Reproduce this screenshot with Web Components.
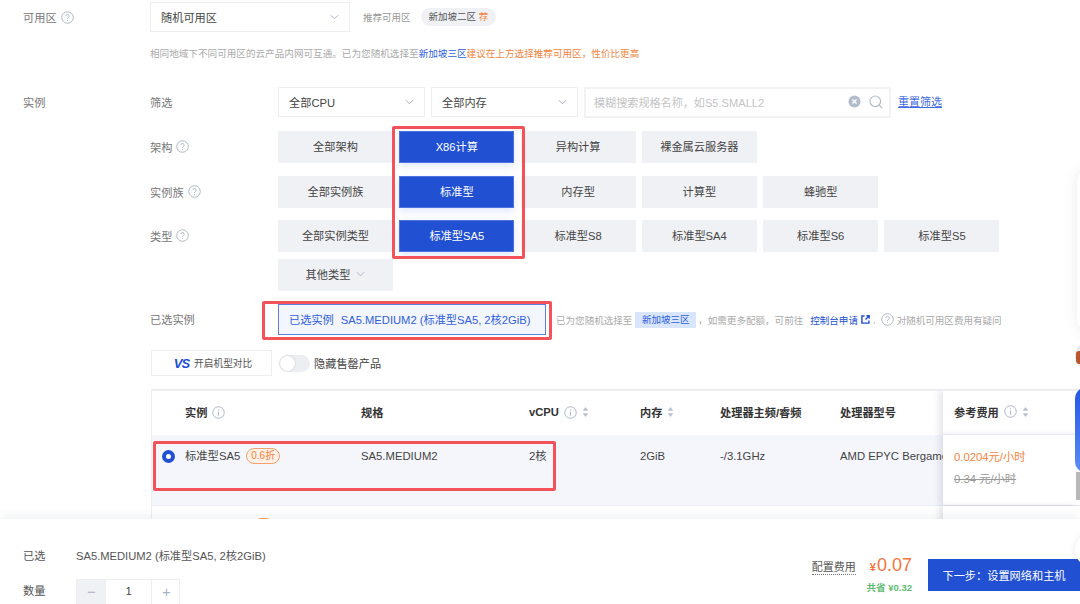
<!DOCTYPE html>
<html lang="zh">
<head>
<meta charset="utf-8">
<title>实例配置</title>
<style>
html,body{margin:0;height:604px;overflow:hidden;background:#fff}
body{font-family:"Liberation Sans","Noto Sans CJK SC",sans-serif;font-size:11.2px;color:#444}
</style>
</head>
<body>
<config-page></config-page>
<script>
const HELP=`<svg viewBox="0 0 14 14" width="13" height="13" fill="none" stroke="#a9b2c4" stroke-width="1"><circle cx="7" cy="7" r="6.2"/><path d="M5.2 5.5a1.8 1.8 0 1 1 2.7 1.6c-.6.3-.9.7-.9 1.4"/><path d="M7 9.6v1.1"/></svg>`
const INFO=`<svg viewBox="0 0 14 14" width="13" height="13" fill="none" stroke="#a9b2c4" stroke-width="1"><circle cx="7" cy="7" r="6.2"/><path d="M7 6v4.4M7 3.6v1.2"/></svg>`
const SORT=`<svg viewBox="0 0 8 12" width="7" height="10" fill="#b9c0cf"><path d="M4 0l3.4 4.6H.6zM4 12L.6 7.4h6.8z"/></svg>`
const CHEV=`<svg viewBox="0 0 10 6" width="9" height="6" fill="none" stroke="#a9b2c4" stroke-width="1.1"><path d="M1 1l4 4 4-4"/></svg>`

class HelpIcon extends HTMLElement{
    constructor(){
        super()
        this.attachShadow({mode:"open"})
        this.shadowRoot.innerHTML=`<style>:host{display:inline-flex;vertical-align:middle}</style>${HELP}`
    }
}
customElements.define("help-icon",HelpIcon)

class SelectBox extends HTMLElement{
    constructor(){
        super()
        this.attachShadow({mode:"open"})
        this.shadowRoot.innerHTML=`<style>
        :host{display:flex;align-items:center;justify-content:space-between;box-sizing:border-box;height:30px;
            padding:0 10px 1px;border:1px solid #eceef2;color:#444;font-size:11.2px;background:#fff}
        </style><slot></slot>${CHEV}`
    }
}
customElements.define("select-box",SelectBox)

class ChipButton extends HTMLElement{
    constructor(){
        super()
        this.attachShadow({mode:"open"})
        this.shadowRoot.innerHTML=`<style>
        :host{display:flex;align-items:center;justify-content:center;gap:6px;box-sizing:border-box;width:115px;height:32px;padding-bottom:2px;
            background:#f0f1f5;color:#444;font-size:11.2px}
        :host([active]){background:#2150d3;color:#fff;border:1px solid #4a72e0;box-shadow:0 3px 8px rgba(33,80,211,.14)}
        </style><slot></slot>`
    }
}
customElements.define("chip-button",ChipButton)

class FormRow extends HTMLElement{
    constructor(){
        super()
        this.attachShadow({mode:"open"})
        this.shadowRoot.innerHTML=`<style>
        :host{display:grid;grid-template-columns:128px 1fr;align-items:center}
        .label{color:#777;font-size:11.2px;display:flex;align-items:center;gap:4px;padding-bottom:1px}
        :host([top]){align-items:start}
        :host([top]) .label{height:31px;padding-bottom:0}
        .body{display:flex;flex-wrap:wrap;gap:7px 6.3px;align-items:center;min-width:0}
        </style><div class="label"><slot name="label"></slot></div><div class="body"><slot></slot></div>`
    }
}
customElements.define("form-row",FormRow)

class ToggleSwitch extends HTMLElement{
    constructor(){
        super()
        this.attachShadow({mode:"open"})
        this.shadowRoot.innerHTML=`<style>
        :host{display:block;width:31px;height:17px;border-radius:9px;background:#eceef2;position:relative}
        i{position:absolute;left:1px;top:1px;width:15px;height:15px;border-radius:50%;background:#fff;box-shadow:0 0 2px rgba(0,0,0,.2)}
        </style><i></i>`
    }
}
customElements.define("toggle-switch",ToggleSwitch)

class InstanceTable extends HTMLElement{
    constructor(){
        super()
        this.attachShadow({mode:"open"})
        this.shadowRoot.innerHTML=`<style>
        :host{display:block;margin-left:151px;width:929px;border-top:2px solid #eceef2;border-left:1px solid #eceef2;box-sizing:border-box;height:160px;overflow:hidden}
        .row{display:grid;grid-template-columns:33px 176px 168px 111px 80px 120px 103px 137px}
        .head{height:44px;align-items:center;font-weight:bold;color:#333;font-size:11.2px}
        .head>div{display:flex;align-items:center;gap:5px;white-space:nowrap;padding-bottom:2px;box-sizing:border-box}
        .item{height:71px;background:#f4f6fc;border-bottom:1px solid #eceef2;box-sizing:border-box;font-size:11.3px;color:#444;line-height:16px}
        .item>div{padding-top:13px;white-space:nowrap;overflow:hidden}
        .item .r{padding:15px 0 0 10px;overflow:visible}
        .item .sa{display:flex;align-items:center;height:16px;padding-top:13px;overflow:visible}
        .radio{display:block;width:13px;height:13px;border-radius:50%;border:4px solid #2150d3;box-sizing:border-box;background:#fff}
        .badge{display:inline-block;border:1px solid #f3a26b;background:#fdf0e6;color:#f3843e;border-radius:8px;font-size:10px;padding:0 4px;line-height:14px;margin-left:6px}
        .fee{background:#fff;box-shadow:-4px 0 6px rgba(60,70,100,.13);padding-left:11px;position:relative}
        .head .fee{height:44px;border-bottom:1px solid #f2f3f7;padding-left:11px}
        .item .fee{padding:14px 0 0 11px;background:#fff}
        .now{color:#f3843e;line-height:16px}
        .old{color:#999;text-decoration:line-through;margin-top:6px;line-height:16px}
        .next{height:44px}
        .next .peek{position:absolute;left:68px;top:12px;width:21px;height:16px;border-radius:8px;background:#fdf0e6;border:1px solid #f3a26b;box-sizing:border-box}
        .next>div{position:relative}
        </style>
        <div class="row head">
            <div></div>
            <div>实例 ${INFO}</div>
            <div>规格</div>
            <div>vCPU ${INFO} ${SORT}</div>
            <div>内存 ${SORT}</div>
            <div>处理器主频/睿频</div>
            <div>处理器型号</div>
            <div class="fee">参考费用 ${INFO} ${SORT}</div>
        </div>
        <div class="row item">
            <div class="r"><span class="radio"></span></div>
            <div class="sa">标准型SA5<span class="badge">0.6折</span></div>
            <div>SA5.MEDIUM2</div>
            <div>2核</div>
            <div>2GiB</div>
            <div>-/3.1GHz</div>
            <div>AMD EPYC Bergamo</div>
            <div class="fee"><div class="now">0.0204元/小时</div><div class="old">0.34 元/小时</div></div>
        </div>
        <div class="row next">
            <div></div><div><span class="peek"></span></div><div></div><div></div><div></div><div></div><div></div><div class="fee" style="height:44px"></div>
        </div>`
    }
}
customElements.define("instance-table",InstanceTable)

class BottomBar extends HTMLElement{
    constructor(){
        super()
        this.attachShadow({mode:"open"})
        this.shadowRoot.innerHTML=`<style>
        :host{position:absolute;left:0;right:0;top:519px;height:85px;background:#fff;box-shadow:0 -3px 10px rgba(40,50,80,.07);
            display:flex;justify-content:space-between;overflow:hidden}
        .left{padding:29px 0 0 23px;display:grid;grid-template-columns:53px auto;grid-template-rows:14px 30px;row-gap:17px;align-items:center;align-content:start;color:#555;font-size:11.2px}
        .qty{align-self:start;line-height:24px}
        .stepper{display:grid;grid-template-columns:29px 46px 29px;height:30px;border:1px solid #eceef2;box-sizing:border-box;width:104px;text-align:center;line-height:23px;color:#444}
        .stepper b{font-weight:normal;color:#a9b2c4;font-size:15px}
        .stepper b:first-child{background:#f0f1f5}
        .stepper span{border-right:1px solid #eceef2}
        .right{display:flex;padding-top:40px;align-items:flex-start}
        .fee{display:grid;justify-items:end;margin-right:16px;position:relative;top:-4px}
        .price{display:flex;align-items:baseline;gap:14px}
        .lbl{color:#555;border-bottom:1px dotted #777;font-size:11px;line-height:14px}
        .amt{color:#f3743e;font-size:11px;font-weight:bold}
        .amt em{font-style:normal;font-size:18px;font-weight:normal;margin-left:1px}
        .save{color:#5dbb70;font-size:9.5px;font-weight:bold;margin-top:4px}
        button{width:152px;height:32px;border:0;background:#2150d3;color:#fff;font:11.2px "Liberation Sans","Noto Sans CJK SC",sans-serif;padding:0}
        </style>
        <div class="left">
            <span>已选</span><span>SA5.MEDIUM2 (标准型SA5, 2核2GiB)</span>
            <span class="qty">数量</span><div class="stepper"><b>−</b><span>1</span><b>+</b></div>
        </div>
        <div class="right">
            <div class="fee">
                <div class="price"><span class="lbl">配置费用</span><span class="amt">¥<em>0.07</em></span></div>
                <div class="save">共省 ¥0.32</div>
            </div>
            <button>下一步：设置网络和主机</button>
        </div>`
    }
}
customElements.define("bottom-bar",BottomBar)

class SideDock extends HTMLElement{
    constructor(){
        super()
        this.attachShadow({mode:"open"})
        this.shadowRoot.innerHTML=`<style>
        :host{position:absolute;left:0;top:0;width:1080px;height:604px;pointer-events:none;overflow:hidden;z-index:3}
        div{position:absolute}
        .card{left:1077px;top:168px;width:40px;height:165px;border-radius:14px;background:#fff;box-shadow:0 0 14px rgba(60,70,100,.1)}
        .ava{left:1075px;top:341px;width:30px;height:30px;border-radius:50%;background:#e8ebf4;overflow:hidden}
        .ava i{position:absolute;left:1px;top:10px;width:6px;height:13px;border-radius:3px;background:#b9562e}
        .blue{left:1075px;top:388px;width:30px;height:84px;border-radius:10px;background:linear-gradient(180deg,#2456e6,#5b8cf5)}
        .gray{left:1076px;top:472px;width:30px;height:28px;background:#b8b8b8}
        .ball{left:1075px;top:532px;width:40px;height:36px;border-radius:50%;background:#fff;box-shadow:0 0 6px rgba(60,70,100,.12)}
        </style>
        <div class="card"></div><div class="ava"><i></i></div><div class="gray"></div><div class="blue"></div><div class="ball"></div>`
    }
}
customElements.define("side-dock",SideDock)

class ConfigPage extends HTMLElement{
    constructor(){
        super()
        this.attachShadow({mode:"open"})
        this.shadowRoot.innerHTML=`<style>
        :host{display:block;position:relative;height:604px;overflow:hidden;font-size:11.2px}
        .zone{display:grid;grid-template-columns:127px 1fr;padding:2px 0 0 23px}
        .side{color:#777;display:flex;align-items:center;gap:4px;height:30px}
        .zone-top{display:flex;align-items:center}
        .zone-top select-box{width:200px}
        .rec{color:#999;font-size:9.5px;margin-left:13px}
        .pill{margin-left:10px;height:18px;line-height:18px;padding:0 8px;border-radius:9px;background:#f0f1f5;font-size:9.5px;color:#555}
        .pill b{font-weight:normal;color:#f3843e}
        .hint{font-size:9.6px;color:#aaa;margin-top:15px;line-height:14px;white-space:nowrap}
        .hint a{color:#2f5fdc}.hint em{font-style:normal;color:#f3843e}
        .inst{display:grid;grid-template-columns:127px 1fr;padding:26px 0 0 23px}
        .stack{display:flex;flex-direction:column}
        .filters{display:flex;align-items:flex-start;gap:6px}
        .filters select-box{width:147px}
        .search{box-sizing:border-box;width:307px;height:31px;border:2px solid #f1f2f6;display:flex;align-items:center;padding:0 6px 2px 8px;color:#c4c4c4;gap:8px;font-size:11.1px}
        .search span{flex:1}
        .reset{color:#3f6ce0;text-decoration:underline;margin-left:1px;font-size:11px;line-height:30px}
        .chosen{box-sizing:border-box;width:268px;height:31px;border:1px solid #5c7fe0;background:#f4f6fd;color:#2f5fdc;display:flex;align-items:center;gap:7px;padding:0 0 1px 10px;font-size:11.2px;white-space:nowrap}
        .note{font-size:9.55px;color:#aaa;margin-left:10px;white-space:nowrap;display:flex;align-items:center;gap:3px}
        .note mark{background:#d8e5fb;color:#2f5fdc;padding:0 6.5px;line-height:16px}
        .note a{color:#2150d3;margin-left:4px}
        .note svg{flex:none}
        .tools{display:flex;align-items:center;margin:15px 0 13px 151px;height:26px}
        .compare{box-sizing:border-box;width:121px;height:26px;border:1px solid #eceef2;display:flex;align-items:center;justify-content:center;gap:5px;font-size:9.7px;color:#555;padding-left:3px}
        .compare i{font:italic bold 13px "Liberation Sans",sans-serif;color:#2150d3;letter-spacing:-1px}
        toggle-switch{margin-left:7px}
        .hide{margin-left:4px;font-size:11.2px;color:#444}
        .mark{position:absolute;border:3px solid #f4525a;border-radius:2px;box-sizing:border-box;pointer-events:none;z-index:2}
        </style>
        <section class="zone">
            <div class="side">可用区 <help-icon></help-icon></div>
            <div>
                <div class="zone-top">
                    <select-box>随机可用区</select-box>
                    <span class="rec">推荐可用区</span>
                    <span class="pill">新加坡二区 <b>荐</b></span>
                </div>
                <div class="hint">相同地域下不同可用区的云产品内网可互通。已为您随机选择至<a>新加坡三区</a><em>建议在上方选择推荐可用区，性价比更高</em></div>
            </div>
        </section>
        <section class="inst">
            <div class="side">实例</div>
            <div class="stack">
                <form-row>
                    <span slot="label">筛选</span>
                    <div class="filters">
                        <select-box>全部CPU</select-box>
                        <select-box>全部内存</select-box>
                        <div class="search"><span>模糊搜索规格名称，如S5.SMALL2</span>
                            <svg viewBox="0 0 14 14" width="13" height="13"><circle cx="7" cy="7" r="6.5" fill="#b4bccb"/><path d="M4.8 4.8l4.4 4.4M9.2 4.8l-4.4 4.4" stroke="#fff" stroke-width="1.4"/></svg>
                            <svg viewBox="0 0 14 14" width="14" height="14" fill="none" stroke="#b4bccb" stroke-width="1.2"><circle cx="6.3" cy="6.3" r="5.3"/><path d="M10.2 10.2l3 3"/></svg>
                        </div>
                        <span class="reset">重置筛选</span>
                    </div>
                </form-row>
                <form-row style="margin-top:13px" top>
                    <span slot="label">架构</span><help-icon slot="label"></help-icon>
                    <chip-button>全部架构</chip-button><chip-button active>X86计算</chip-button><chip-button>异构计算</chip-button><chip-button>裸金属云服务器</chip-button>
                </form-row>
                <form-row style="margin-top:13px" top>
                    <span slot="label">实例族</span><help-icon slot="label"></help-icon>
                    <chip-button>全部实例族</chip-button><chip-button active>标准型</chip-button><chip-button>内存型</chip-button><chip-button>计算型</chip-button><chip-button>蜂驰型</chip-button>
                </form-row>
                <form-row style="margin-top:12px" top>
                    <span slot="label">类型</span><help-icon slot="label"></help-icon>
                    <chip-button>全部实例类型</chip-button><chip-button active>标准型SA5</chip-button><chip-button>标准型S8</chip-button><chip-button>标准型SA4</chip-button><chip-button>标准型S6</chip-button><chip-button>标准型S5</chip-button>
                    <chip-button>其他类型 ${CHEV}</chip-button>
                </form-row>
                <form-row style="margin-top:13px">
                    <span slot="label">已选实例</span>
                    <div style="display:flex;align-items:center">
                        <div class="chosen"><span>已选实例</span><span>SA5.MEDIUM2 (标准型SA5, 2核2GiB)</span></div>
                        <div class="note"><span>已为您随机选择至</span><mark>新加坡三区</mark><b>,</b><span style="margin-left:3px">如需更多配额，可前往</span><a>控制台申请</a>
                            <svg viewBox="0 0 10 10" width="9" height="9" fill="none" stroke="#2150d3" stroke-width="1.6"><path d="M4 1.2H1v7.8h7.8V6M5 5l4-4M6 .9h3.1V4"/></svg><span style="margin-right:2px">,</span><help-icon></help-icon><span>对随机可用区费用有疑问</span></div>
                    </div>
                </form-row>
            </div>
        </section>
        <div class="tools">
            <div class="compare"><i>VS</i>开启机型对比</div>
            <toggle-switch></toggle-switch>
            <span class="hide">隐藏售罄产品</span>
        </div>
        <instance-table></instance-table>
        <div class="mark" style="left:392px;top:126px;width:133px;height:133px"></div>
        <div class="mark" style="left:262px;top:301px;width:290px;height:39px"></div>
        <div class="mark" style="left:153px;top:441px;width:403px;height:50px"></div>
        <bottom-bar></bottom-bar>
        <side-dock></side-dock>`
    }
}
customElements.define("config-page",ConfigPage)
</script>
</body>
</html>
